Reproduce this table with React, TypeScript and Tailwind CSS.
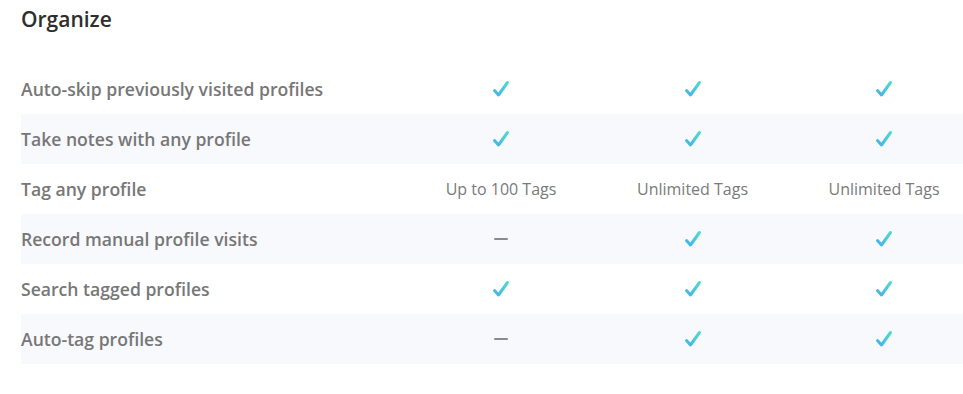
import React from 'react';

type Cell = 'check' | 'none' | string;

const ROWS: { label: string; cells: Cell[] }[] = [
  { label: 'Auto-skip previously visited profiles', cells: ['check', 'check', 'check'] },
  { label: 'Take notes with any profile', cells: ['check', 'check', 'check'] },
  { label: 'Tag any profile', cells: ['Up to 100 Tags', 'Unlimited Tags', 'Unlimited Tags'] },
  { label: 'Record manual profile visits', cells: ['none', 'check', 'check'] },
  { label: 'Search tagged profiles', cells: ['check', 'check', 'check'] },
  { label: 'Auto-tag profiles', cells: ['none', 'check', 'check'] },
];

function Check() {
  return (
    <svg width="18" height="18" viewBox="0 0 18 18" fill="none">
      <defs>
        <linearGradient id="chk" x1="0" y1="18" x2="18" y2="0" gradientUnits="userSpaceOnUse">
          <stop offset="0" stopColor="#46a9ec" />
          <stop offset="1" stopColor="#4fe3cc" />
        </linearGradient>
      </defs>
      <path d="M2.5 10.5 L6.5 15 L15.5 2.5" stroke="url(#chk)" strokeWidth="3" strokeLinecap="round" strokeLinejoin="round" />
    </svg>
  );
}

function Value({ cell }: { cell: Cell }) {
  if (cell === 'check') return <Check />;
  if (cell === 'none') return <span className="block w-[14px] h-[2px] bg-[#8a8a8a] rounded" />;
  return <span className="text-[16px] text-[#7a7a7a]">{cell}</span>;
}

export default function App() {
  return (
    <div className="w-[963px] h-[394px] overflow-hidden bg-white" style={{ fontFamily: '"Open Sans", "Liberation Sans", sans-serif' }}>
      <div className="px-[21px]">
        <h2 className="pt-[5px] text-[21px] leading-[29px] font-semibold text-[#2e2e2e]">Organize</h2>
        <div className="mt-[30px] w-[960px]">
          {ROWS.map((row, idx) => (
            <div
              key={idx}
              className={`grid grid-cols-[384px_192px_191px_192px] h-[50px] items-center ${idx % 2 === 1 ? 'bg-[#f7f9fc]' : ''}`}
            >
              <span className="text-[17.6px] font-semibold text-[#777]">{row.label}</span>
              {row.cells.map((c, i) => (
                <div key={i} className="flex justify-center items-center">
                  <Value cell={c} />
                </div>
              ))}
            </div>
          ))}
        </div>
      </div>
    </div>
  );
}
